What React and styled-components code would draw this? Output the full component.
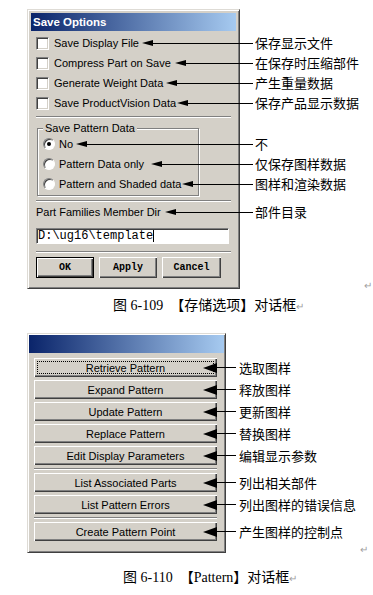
import React from 'react';
import styled, { createGlobalStyle, css } from 'styled-components';

const GlobalStyle = createGlobalStyle`
  html, body {
    margin: 0;
    padding: 0;
    background: #fff;
  }
`;

const Page = styled.div`
  width: 373px;
  height: 595px;
  overflow: hidden;
  display: flex;
  flex-direction: column;
  font-family: "Liberation Sans", Arial, sans-serif;
  color: #000;
`;

const FigureRow = styled.div`
  display: flex;
  align-items: flex-end;
  padding-left: 27px;
  margin-top: ${p => p.$top}px;
`;

const ReturnMark = styled.span`
  margin-left: auto;
  margin-right: ${p => p.$right}px;
  margin-bottom: ${p => p.$bottom}px;
  font-size: 10px;
  line-height: 10px;
  color: #a0a0a0;
`;

const Caption = styled.div`
  margin-top: ${p => p.$top}px;
  padding-left: ${p => p.$left}px;
  height: 20px;
  line-height: 20px;
  font-family: "Liberation Serif", "Noto Sans CJK SC", serif;
  font-size: 14px;
  white-space: nowrap;
`;

const CaptionMark = styled.span`
  font-size: 10px;
  color: #a0a0a0;
`;

/* window frame */
const Window = styled.div`
  width: ${p => p.$w}px;
  box-sizing: border-box;
  background: #d4d0c8;
  border: 1px solid;
  border-color: #dedbd5 #404040 #404040 #dedbd5;
  box-shadow: inset 1px 1px #fff, inset -1px -1px #808080;
  padding: ${p => p.$pad}px;
`;

const TitleBar = styled.div`
  height: ${p => p.$h}px;
  background: linear-gradient(to right, #0a246a, #a6caf0);
  color: #fff;
  font-size: 11.5px;
  font-weight: bold;
  line-height: ${p => p.$h}px;
  padding-left: 2px;
`;

const Body = styled.div`
  display: flex;
  flex-direction: column;
  padding: 2px 5px 7px 5px;
`;

const OptionRow = styled.div`
  height: 20px;
  display: flex;
  align-items: center;
  font-size: 11px;
  white-space: nowrap;
`;

const CheckBox = styled.span`
  flex: none;
  width: 13px;
  height: 13px;
  box-sizing: border-box;
  margin-right: 5px;
  background: #fff;
  border: 1px solid;
  border-color: #808080 #fff #fff #808080;
  box-shadow: inset 1px 1px #404040, inset -1px -1px #d4d0c8;
`;

const Radio = styled.span`
  flex: none;
  width: 12px;
  height: 12px;
  box-sizing: border-box;
  margin-right: 4px;
  border-radius: 50%;
  background: #fff;
  border: 1px solid;
  border-color: #808080 #fff #fff #808080;
  box-shadow: inset 1px 1px #404040;
  display: flex;
  align-items: center;
  justify-content: center;

  &::after {
    content: "";
    width: 4px;
    height: 4px;
    border-radius: 50%;
    background: ${p => (p.$on ? '#000' : 'transparent')};
  }
`;

const Etched = styled.div`
  flex: none;
  height: 0;
  border-top: 1px solid #808080;
  border-bottom: 1px solid #fff;
  margin-top: ${p => p.$mt || 0}px;
`;

const GroupBox = styled.fieldset`
  margin: 4px 0 0 1px;
  padding: 0 5px 1px 5px;
  width: 162px;
  min-inline-size: auto;
  box-sizing: border-box;
  border: 1px solid #808080;
  box-shadow: 1px 1px #fff, inset 1px 1px #fff;
`;

const Legend = styled.legend`
  padding: 0 2px;
  font-size: 11px;
  line-height: 12px;
  background: #d4d0c8;
`;

const PathField = styled.div`
  margin-top: 6px;
  width: 193px;
  height: 16px;
  box-sizing: border-box;
  display: flex;
  align-items: center;
  padding-left: 1px;
  background: #fff;
  border: 1px solid;
  border-color: #808080 #fff #fff #808080;
  box-shadow: inset 1px 1px #404040;
  font-family: "Liberation Mono", monospace;
  font-size: 12px;
  line-height: 14px;
`;

const Caret = styled.span`
  width: 1px;
  height: 12px;
  background: #000;
`;

const ButtonBar = styled.div`
  display: flex;
  gap: 5px;
  margin-top: 4px;
`;

const raised = css`
  background: #d4d0c8;
  padding: 0;
  box-sizing: border-box;
  color: #000;
  box-shadow: inset 1px 1px #fff, inset -1px -1px #404040, inset -2px -2px #808080;
`;

const PushButton = styled.button`
  ${raised}
  width: ${p => p.$w}px;
  height: 21px;
  border: ${p => (p.$default ? '1px solid #000' : 'none')};
  font-family: "Liberation Mono", monospace;
  font-size: 10px;
  font-weight: bold;
`;

/* callouts */
const Pointer = styled.span`
  flex: 1;
  position: relative;
  display: flex;
  align-items: center;
  margin-left: ${p => p.$gap}px;
  margin-right: -${p => p.$reach}px;
`;

const Head = styled.span`
  flex: none;
  width: 0;
  height: 0;
  border-top: ${p => p.$h / 2}px solid transparent;
  border-bottom: ${p => p.$h / 2}px solid transparent;
  border-right: ${p => p.$w}px solid #000;
`;

const Line = styled.span`
  flex: ${p => (p.$len ? 'none' : '1')};
  width: ${p => p.$len || 0}px;
  height: 1px;
  background: #000;
`;

const NoteText = styled.span`
  font-family: "Noto Sans CJK SC", sans-serif;
  font-size: 13px;
  line-height: 16px;
  white-space: nowrap;
  color: #000;
`;

const FloatNote = styled(NoteText)`
  position: absolute;
  left: calc(100% + 2px);
  top: 50%;
  transform: translateY(-50%);
`;

const Note = styled(NoteText)`
  margin-left: 3px;
`;

const Callout = ({ note, reach, gap = 3 }) => (
  <Pointer $reach={reach} $gap={gap}>
    <Head $w={11} $h={7} />
    <Line />
    <FloatNote>{note}</FloatNote>
  </Pointer>
);

/* pattern dialog */
const ButtonList = styled.div`
  display: flex;
  flex-direction: column;
  gap: 3px;
  padding: 5px 7px 10px 5px;
`;

const Slot = styled.div`
  position: relative;
`;

const Tag = styled.span`
  position: absolute;
  left: calc(100% - 14px);
  top: 50%;
  transform: translateY(-50%);
  display: flex;
  align-items: center;
`;

const ActionButton = styled.button`
  ${raised}
  position: relative;
  display: block;
  width: 183px;
  height: 19px;
  border: none;
  font-family: "Liberation Sans", Arial, sans-serif;
  font-size: 11px;

  ${p => p.$focus && css`
    &::after {
      content: "";
      position: absolute;
      inset: 3px 3px 3px 3px;
      border: 1px dotted #000;
    }
  `}
`;

const saveChecks = [
  ['Save Display File', '保存显示文件', 3],
  ['Compress Part on Save', '在保存时压缩部件', 4],
  ['Generate Weight Data', '产生重量数据', 3],
  ['Save ProductVision Data', '保存产品显示数据', 1],
];

const patternRadios = [
  ['No', '不', true, 3],
  ['Pattern Data only', '仅保存图样数据', false, 7],
  ['Pattern and Shaded data', '图样和渲染数据', false, 1],
];

const patternActions = [
  ['Retrieve Pattern', '选取图样'],
  ['Expand Pattern', '释放图样'],
  ['Update Pattern', '更新图样'],
  ['Replace Pattern', '替换图样'],
  ['Edit Display Parameters', '编辑显示参数'],
  'sep',
  ['List Associated Parts', '列出相关部件'],
  ['List Pattern Errors', '列出图样的错误信息'],
  'sep',
  ['Create Pattern Point', '产生图样的控制点'],
];

const App = () => {
  return (
    <Page>
      <GlobalStyle />

      <FigureRow $top={9}>
        <Window $w={213} $pad={3}>
          <TitleBar $h={18}>Save Options</TitleBar>
          <Body>
            {saveChecks.map(([label, note, gap]) => (
              <OptionRow key={label}>
                <CheckBox />
                {label}
                <Callout note={note} reach={22} gap={gap} />
              </OptionRow>
            ))}
            <Etched $mt={3} />
            <GroupBox>
              <Legend>Save Pattern Data</Legend>
              {patternRadios.map(([label, note, on, gap]) => (
                <OptionRow key={label}>
                  <Radio $on={on} />
                  {label}
                  <Callout note={note} reach={60} gap={gap} />
                </OptionRow>
              ))}
            </GroupBox>
            <Etched $mt={4} />
            <OptionRow>
              Part Families Member Dir
              <Callout note="部件目录" reach={22} gap={4} />
            </OptionRow>
            <PathField>
              D:\ug16\template
              <Caret />
            </PathField>
            <Etched $mt={7} />
            <ButtonBar>
              <PushButton $w={58} $default>OK</PushButton>
              <PushButton $w={58}>Apply</PushButton>
              <PushButton $w={59}>Cancel</PushButton>
            </ButtonBar>
          </Body>
        </Window>
        <ReturnMark $right={1} $bottom={-2}>↵</ReturnMark>
      </FigureRow>

      <Caption $top={7} $left={113}>
        图 6-109　【存储选项】对话框<CaptionMark>↵</CaptionMark>
      </Caption>

      <FigureRow $top={17}>
        <Window $w={199} $pad={1}>
          <TitleBar $h={18} />
          <ButtonList>
            {patternActions.map((item, i) =>
              item === 'sep' ? (
                <Etched key={i} />
              ) : (
                <Slot key={item[0]}>
                  <ActionButton $focus={i === 0}>{item[0]}</ActionButton>
                  <Tag>
                    <Head $w={14} $h={10} />
                    <Line $len={19} />
                    <Note>{item[1]}</Note>
                  </Tag>
                </Slot>
              )
            )}
          </ButtonList>
        </Window>
        <ReturnMark $right={5} $bottom={-2}>↵</ReturnMark>
      </FigureRow>

      <Caption $top={15} $left={123}>
        图 6-110　【Pattern】对话框<CaptionMark>↵</CaptionMark>
      </Caption>
    </Page>
  );
};

export default App;
